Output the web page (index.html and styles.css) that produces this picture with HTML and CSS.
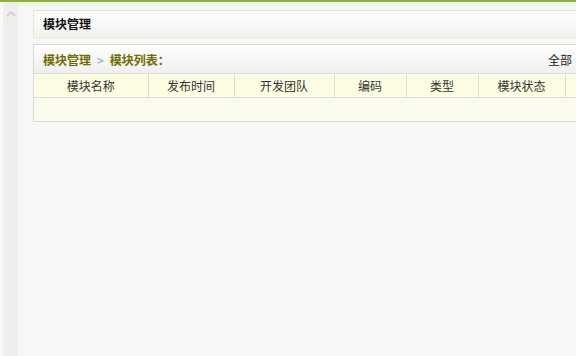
FILE: index.html
```html
<!DOCTYPE html>
<html lang="zh-CN">
<head>
  <meta charset="UTF-8" />
  <title>模块管理</title>
  <link rel="stylesheet" href="styles.css">
</head>
<body>

  <div class="layout">
    <!-- left scroll strip -->
    <aside class="side-strip">
      <svg class="up-arrow" width="10" height="6" viewBox="0 0 10 6">
        <path d="M1 5 L5 1 L9 5" fill="none" stroke="#c8c8c8" stroke-width="1.5"/>
      </svg>
    </aside>

    <main class="main">
      <div class="page-title">模块管理</div>

      <div class="panel">
        <div class="panel-head">
          <div class="crumbs">
            <span>模块管理</span>
            <span class="sep">&gt;</span>
            <span>模块列表：</span>
          </div>
          <div class="filter">全部</div>
        </div>

        <table class="list">
          <colgroup>
            <col style="width:114px">
            <col style="width:86px">
            <col style="width:100px">
            <col style="width:72px">
            <col style="width:72px">
            <col style="width:87px">
            <col>
          </colgroup>
          <thead>
            <tr>
              <th>模块名称</th>
              <th>发布时间</th>
              <th>开发团队</th>
              <th>编码</th>
              <th>类型</th>
              <th>模块状态</th>
              <th></th>
            </tr>
          </thead>
          <tbody>
            <tr class="empty"><td colspan="7"></td></tr>
          </tbody>
        </table>
      </div>
    </main>
  </div>

</body>
</html>
```

FILE: styles.css
```css
:root {
  --green-top: #8fb03e;
  --olive: #6e6d00;
  --panel-border: #d6d6d6;
  --head-yellow: #fdfde4;
  --row-yellow: #fafbec;
}

html, body {
  height: 100%;
}

body {
  margin: 0;
  font-family: "Noto Sans CJK SC", "Noto Sans", sans-serif;
  font-size: 12px;
  color: #222;
  background: #f7f7f7;
  overflow: hidden;
}

.layout {
  display: flex;
  min-height: 100%;
  border-top: 2px solid var(--green-top);
  background: linear-gradient(#eef4dc, #f7f7f7 6px);
}

/* --- left strip --- */
.side-strip {
  width: 15px;
  flex: none;
  border-left: 3px solid #f9f9f9;
  background: #eeeeee;
  display: flex;
  justify-content: center;
  padding-top: 9px;
  box-sizing: content-box;
}
.up-arrow {
  display: block;
}

.main {
  flex: none;
  width: 545px;
  padding: 8px 0 0 15px;
}

/* --- page title box --- */
.page-title {
  width: 560px;
  height: 26px;
  line-height: 26px;
  padding-left: 9px;
  border: 1px dotted #cfdf96;
  background: linear-gradient(#ffffff, #f1f1f1);
  font-weight: bold;
  color: #111;
}

/* --- list panel --- */
.panel {
  margin-top: 6px;
  border: 1px solid var(--panel-border);
  background: var(--row-yellow);
}
.panel-head {
  height: 28px;
  display: flex;
  align-items: center;
  justify-content: space-between;
  padding: 0 5px 0 9px;
  background: linear-gradient(#ffffff, #efefef);
  border-bottom: 1px solid #dcdcdc;
}
.crumbs {
  display: flex;
  gap: 6px;
  font-weight: bold;
  color: var(--olive);
}
.crumbs .sep {
  color: #8a9cb0;
  font-weight: normal;
}
.filter {
  color: #222;
}

.list {
  width: 100%;
  border-collapse: collapse;
  table-layout: fixed;
}
.list th {
  height: 23px;
  padding: 0;
  font-weight: normal;
  color: #333;
  background: var(--head-yellow);
  border-right: 1px solid #dcdcd0;
  border-bottom: 1px solid #dcdcd0;
}
.list .empty td {
  height: 21px;
  background: var(--row-yellow);
}
```
